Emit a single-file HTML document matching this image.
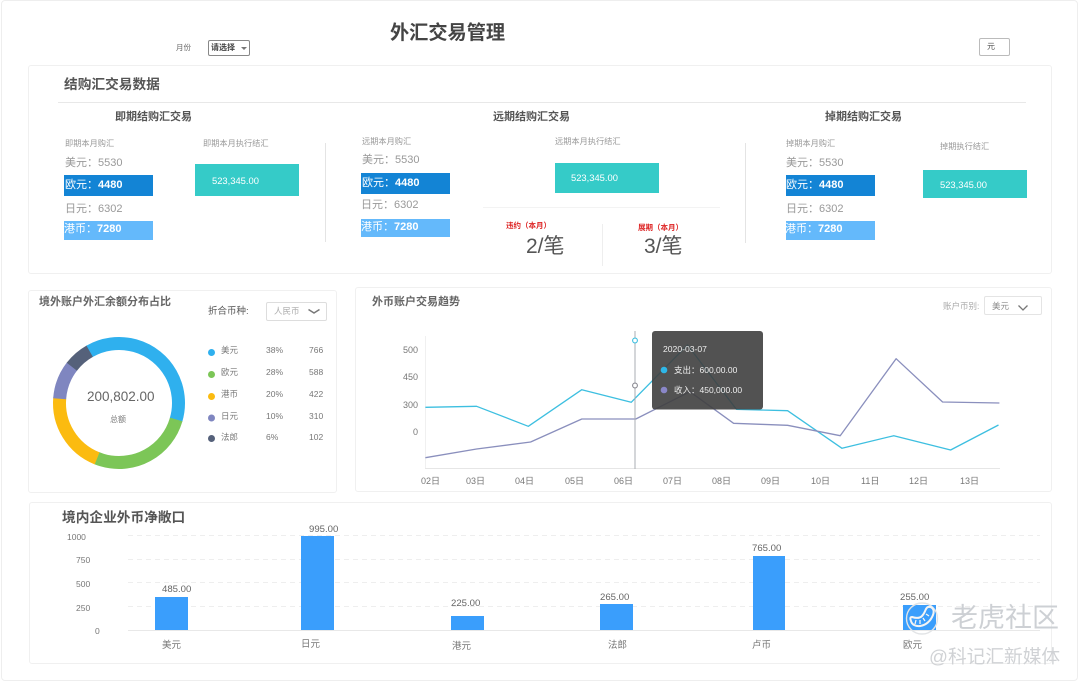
<!DOCTYPE html>
<html lang="zh-CN">
<head>
<meta charset="utf-8">
<title>外汇交易管理</title>
<style>
html,body{margin:0;padding:0;background:#fff}
#p{position:relative;width:1080px;height:681px;overflow:hidden;background:#fff;font-family:"Liberation Sans","Noto Sans CJK SC",sans-serif;filter:blur(.3px)}
.b{position:absolute;box-sizing:border-box}
.c{position:absolute;box-sizing:border-box;border:1px solid #f0f0f0;border-radius:3px}
.t{position:absolute;white-space:nowrap;line-height:1}
.h{font-weight:700;color:#555}
.s{font-size:8.2px;color:#999}
.v{font-size:11px;color:#999}
.w{font-size:11px;color:#fff}
.w b,.v b{font-weight:700}
.m{font-size:9.4px;color:#fff}
.l{font-size:8.5px;color:#777}
.y{font-size:9px;color:#777}
.x{font-size:9px;color:#777}
.n{font-size:9.6px;color:#666}
svg{position:absolute;left:0;top:0}
</style>
</head>
<body>
<div id="p">
<div class="b" style="left:1px;top:0;width:1077px;height:681px;border:1px solid #eee;border-radius:4px"></div>

<div class="t" style="left:390px;top:24px;font-size:19.2px;font-weight:700;color:#444">外汇交易管理</div>
<div class="t" style="left:176px;top:44px;font-size:7.5px;color:#666">月份</div>
<div class="b" style="left:208px;top:40px;width:42px;height:16px;border:1px solid #888;border-radius:2px"></div>
<div class="t" style="left:211px;top:44px;font-size:8px;color:#444;font-weight:700">请选择</div>
<div class="b" style="left:241px;top:47px;width:0;height:0;border-left:3px solid transparent;border-right:3px solid transparent;border-top:3px solid #777"></div>
<div class="b" style="left:979px;top:38px;width:31px;height:18px;border:1px solid #bbb;border-radius:2px"></div>
<div class="t" style="left:987px;top:43px;font-size:8px;color:#555">元</div>

<div class="c" style="left:28px;top:65px;width:1024px;height:209px"></div>
<div class="t h" style="left:64px;top:78px;font-size:13.7px">结购汇交易数据</div>
<div class="b" style="left:58px;top:102px;width:968px;height:1px;background:#e8e8e8"></div>
<div class="t h" style="left:115px;top:112px;font-size:11px">即期结购汇交易</div>
<div class="t h" style="left:493px;top:112px;font-size:11px">远期结购汇交易</div>
<div class="t h" style="left:825px;top:112px;font-size:11px">掉期结购汇交易</div>

<div class="t s" style="left:65px;top:140px">即期本月购汇</div>
<div class="t s" style="left:203px;top:140px">即期本月执行结汇</div>
<div class="t s" style="left:362px;top:138px">远期本月购汇</div>
<div class="t s" style="left:555px;top:138px">远期本月执行结汇</div>
<div class="t s" style="left:786px;top:140px">掉期本月购汇</div>
<div class="t s" style="left:940px;top:143px">掉期执行结汇</div>

<div class="t v" style="left:65px;top:158px">美元：5530</div>
<div class="b" style="left:64px;top:175px;width:89px;height:21px;background:#1384d5"></div>
<div class="t w" style="left:65px;top:180px">欧元：<b>4480</b></div>
<div class="t v" style="left:65px;top:204px">日元：6302</div>
<div class="b" style="left:64px;top:221px;width:89px;height:19px;background:#64b9fb"></div>
<div class="t w" style="left:64px;top:224px">港币：<b>7280</b></div>

<div class="t v" style="left:362px;top:155px">美元：5530</div>
<div class="b" style="left:361px;top:173px;width:89px;height:21px;background:#1384d5"></div>
<div class="t w" style="left:362px;top:178px">欧元：<b>4480</b></div>
<div class="t v" style="left:361px;top:200px">日元：6302</div>
<div class="b" style="left:361px;top:219px;width:89px;height:18px;background:#64b9fb"></div>
<div class="t w" style="left:361px;top:222px">港币：<b>7280</b></div>

<div class="t v" style="left:786px;top:158px">美元：5530</div>
<div class="b" style="left:786px;top:175px;width:89px;height:21px;background:#1384d5"></div>
<div class="t w" style="left:786px;top:180px">欧元：<b>4480</b></div>
<div class="t v" style="left:786px;top:204px">日元：6302</div>
<div class="b" style="left:786px;top:221px;width:89px;height:19px;background:#64b9fb"></div>
<div class="t w" style="left:785px;top:224px">港币：<b>7280</b></div>

<div class="b" style="left:195px;top:164px;width:104px;height:32px;background:#35cbc8"></div>
<div class="t m" style="left:212px;top:176px">523,345.00</div>
<div class="b" style="left:555px;top:163px;width:104px;height:30px;background:#35cbc8"></div>
<div class="t m" style="left:571px;top:173px">523,345.00</div>
<div class="b" style="left:923px;top:170px;width:104px;height:28px;background:#35cbc8"></div>
<div class="t m" style="left:940px;top:180px">523,345.00</div>

<div class="b" style="left:325px;top:143px;width:1px;height:99px;background:#e4e4e4"></div>
<div class="b" style="left:745px;top:143px;width:1px;height:100px;background:#e4e4e4"></div>
<div class="b" style="left:483px;top:207px;width:237px;height:1px;background:#f3f3f3"></div>
<div class="b" style="left:602px;top:224px;width:1px;height:42px;background:#eee"></div>
<div class="t" style="left:506px;top:222px;font-size:7.5px;font-weight:700;color:#d22">违约（本月）</div>
<div class="t" style="left:638px;top:224px;font-size:7.5px;font-weight:700;color:#d22">展期（本月）</div>
<div class="t" style="left:526px;top:236px;font-size:21px;color:#555">2/笔</div>
<div class="t" style="left:644px;top:236px;font-size:21px;color:#555">3/笔</div>

<div class="c" style="left:28px;top:290px;width:309px;height:203px"></div>
<div class="t" style="left:39px;top:297px;font-size:11px;font-weight:700;color:#666">境外账户外汇余额分布占比</div>
<div class="t" style="left:208px;top:307px;font-size:9.5px;color:#555">折合币种:</div>
<div class="b" style="left:266px;top:302px;width:61px;height:19px;border:1px solid #ddd;border-radius:2px"></div>
<div class="t" style="left:274px;top:307px;font-size:8.5px;color:#aaa">人民币</div>

<svg width="1080" height="681" viewBox="0 0 1080 681" fill="none">
<path d="M308.500 309.500L314 313L319.500 309.500" stroke="#777" stroke-width="1.500"/>
<g fill="none" stroke-width="13">
<circle cx="119" cy="403" r="59.500" pathLength="360" stroke="#2fb0ee" stroke-dasharray="136.500 223.500" transform="rotate(-119.500 119 403)"/>
<circle cx="119" cy="403" r="59.500" pathLength="360" stroke="#7cc657" stroke-dasharray="95.500 264.500" transform="rotate(16.500 119 403)"/>
<circle cx="119" cy="403" r="59.500" pathLength="360" stroke="#fbbb10" stroke-dasharray="73 287" transform="rotate(112 119 403)"/>
<circle cx="119" cy="403" r="59.500" pathLength="360" stroke="#7f86c0" stroke-dasharray="33.500 326.500" transform="rotate(184.500 119 403)"/>
<circle cx="119" cy="403" r="59.500" pathLength="360" stroke="#55617a" stroke-dasharray="22.500 337.500" transform="rotate(218 119 403)"/>
</g>
<circle cx="211.500" cy="352.500" r="3.500" fill="#2fb0ee"/>
<circle cx="211.500" cy="374.500" r="3.500" fill="#7cc657"/>
<circle cx="211.500" cy="396.500" r="3.500" fill="#fbbb10"/>
<circle cx="211.500" cy="418" r="3.500" fill="#7f86c0"/>
<circle cx="211.500" cy="438.500" r="3.500" fill="#55617a"/>
</svg>

<div class="t" style="left:87px;top:390px;font-size:13.500px;color:#666">200,802.00</div>
<div class="t" style="left:110px;top:416px;font-size:8px;color:#777">总额</div>

<div class="t l" style="left:221px;top:346px">美元</div><div class="t l" style="left:266px;top:346px">38%</div><div class="t l" style="left:309px;top:346px">766</div>
<div class="t l" style="left:221px;top:368px">欧元</div><div class="t l" style="left:266px;top:368px">28%</div><div class="t l" style="left:309px;top:368px">588</div>
<div class="t l" style="left:221px;top:390px">港币</div><div class="t l" style="left:266px;top:390px">20%</div><div class="t l" style="left:309px;top:390px">422</div>
<div class="t l" style="left:221px;top:412px">日元</div><div class="t l" style="left:266px;top:412px">10%</div><div class="t l" style="left:309px;top:412px">310</div>
<div class="t l" style="left:221px;top:433px">法郎</div><div class="t l" style="left:266px;top:433px">6%</div><div class="t l" style="left:309px;top:433px">102</div>

<div class="c" style="left:355px;top:287px;width:697px;height:205px"></div>
<div class="t" style="left:372px;top:297px;font-size:11px;font-weight:700;color:#666">外币账户交易趋势</div>
<div class="t" style="left:943px;top:302px;font-size:8.500px;color:#aaa">账户币别:</div>
<div class="b" style="left:984px;top:296px;width:58px;height:19px;border:1px solid #e4e4e4;border-radius:2px"></div>
<div class="t" style="left:992px;top:302px;font-size:8.500px;color:#888">美元</div>

<div class="t y" style="left:403px;top:346px">500</div>
<div class="t y" style="left:403px;top:373px">450</div>
<div class="t y" style="left:403px;top:401px">300</div>
<div class="t y" style="left:413px;top:428px">0</div>

<svg width="1080" height="681" viewBox="0 0 1080 681" fill="none">
<path d="M1018.500 305.500L1023 310L1027.500 305.500" stroke="#777" stroke-width="1.300"/>
<path d="M425.500 336V468" stroke="#f0f0f0"/>
<path d="M425 468.500H1000" stroke="#e6e6e6"/>
<polyline points="425.400,407.300 476.600,406.300 528.300,426.300 581.800,389.700 631.200,402.300 687.500,345 736.400,409.300 787.600,410.700 842,448.300 893.800,435.700 950.600,450 998.500,425" stroke="#3dbfe0" stroke-width="1.300" stroke-linejoin="round"/>
<polyline points="425.400,457.700 476.600,449 530.600,442 581.800,419 635.800,419 689.900,391.700 733.600,423.300 787.600,425.300 840.200,435.700 896.100,358.700 942.600,402 999.400,403" stroke="#8a8fbd" stroke-width="1.300" stroke-linejoin="round"/>
<path d="M635 331V469" stroke="#a9adb3" stroke-width="1"/>
<circle cx="635" cy="340.500" r="2.400" fill="#fff" stroke="#3dbfe0" stroke-width="1.100"/>
<circle cx="635" cy="385.500" r="2.400" fill="#fff" stroke="#8a8a92" stroke-width="1.100"/>
<rect x="652" y="331" width="111" height="78.500" rx="3" fill="#3f3f3f" fill-opacity=".9"/>
<circle cx="664" cy="370" r="3.300" fill="#2eb7e8"/>
<circle cx="664" cy="390" r="3.300" fill="#8a87c8"/>
</svg>

<div class="t" style="left:663px;top:345px;font-size:8.600px;color:#eee">2020-03-07</div>
<div class="t" style="left:674px;top:366px;font-size:8.500px;color:#eee">支出：600,00.00</div>
<div class="t" style="left:674px;top:386px;font-size:8.500px;color:#eee">收入：450,000.00</div>

<div class="t x" style="left:421px;top:477px">02日</div>
<div class="t x" style="left:466px;top:477px">03日</div>
<div class="t x" style="left:515px;top:477px">04日</div>
<div class="t x" style="left:565px;top:477px">05日</div>
<div class="t x" style="left:614px;top:477px">06日</div>
<div class="t x" style="left:663px;top:477px">07日</div>
<div class="t x" style="left:712px;top:477px">08日</div>
<div class="t x" style="left:761px;top:477px">09日</div>
<div class="t x" style="left:811px;top:477px">10日</div>
<div class="t x" style="left:861px;top:477px">11日</div>
<div class="t x" style="left:909px;top:477px">12日</div>
<div class="t x" style="left:960px;top:477px">13日</div>

<div class="c" style="left:29px;top:502px;width:1023px;height:162px"></div>
<div class="t h" style="left:62px;top:511px;font-size:13.700px">境内企业外币净敞口</div>
<div class="t y" style="left:67px;top:533px;font-size:8.500px">1000</div>
<div class="t y" style="left:76px;top:556px;font-size:8.500px">750</div>
<div class="t y" style="left:76px;top:580px;font-size:8.500px">500</div>
<div class="t y" style="left:76px;top:604px;font-size:8.500px">250</div>
<div class="t y" style="left:95px;top:627px;font-size:8.500px">0</div>

<svg width="1080" height="681" viewBox="0 0 1080 681" fill="none">
<path d="M128 535.500H1040M128 559.500H1040M128 582.500H1040M128 606.500H1040" stroke="#eee" stroke-dasharray="5 4"/>
<path d="M128 630.500H1040" stroke="#e8e8e8"/>
<g fill="#3a9efc">
<rect x="155" y="597" width="33" height="33"/>
<rect x="301" y="536" width="33" height="94"/>
<rect x="451" y="616" width="33" height="14"/>
<rect x="600" y="604" width="33" height="26"/>
<rect x="753" y="556" width="32" height="74"/>
<rect x="903" y="605" width="33" height="25"/>
</g>
</svg>

<div class="t n" style="left:162px;top:585px">485.00</div>
<div class="t n" style="left:309px;top:525px">995.00</div>
<div class="t n" style="left:451px;top:599px">225.00</div>
<div class="t n" style="left:600px;top:593px">265.00</div>
<div class="t n" style="left:752px;top:544px">765.00</div>
<div class="t n" style="left:900px;top:593px">255.00</div>

<div class="t x" style="left:162px;top:641px;font-size:9.500px">美元</div>
<div class="t x" style="left:301px;top:640px;font-size:9.500px">日元</div>
<div class="t x" style="left:452px;top:642px;font-size:9.500px">港元</div>
<div class="t x" style="left:608px;top:641px;font-size:9.500px">法郎</div>
<div class="t x" style="left:752px;top:641px;font-size:9.500px">卢币</div>
<div class="t x" style="left:903px;top:641px;font-size:9.500px">欧元</div>

<svg width="1080" height="681" viewBox="0 0 1080 681" fill="none">
<circle cx="922" cy="618.500" r="15.500" stroke="#e2e4e6" stroke-width="1.400" fill="none"/>
<path d="M911 621C913 629 928 628 933 615C935 610 932 606 928 607C925 608 926 612 922 616C919 619 915 618 912 617C910 617 910 619 911 621Z" fill="#3a9efc" stroke="#f4f4f4" stroke-width="2"/>
<path d="M915 624L916 620M920 624L920 620M925 621L923 618M929 616L926 614" stroke="#f4f4f4" stroke-width="1.300"/>
</svg>
<div class="t" style="left:951px;top:605px;font-size:27px;color:#cdd0d4">老虎社区</div>
<div class="t" style="left:929px;top:648px;font-size:18.700px;color:#d0d2d5">@科记汇新媒体</div>
</div>
</body>
</html>
